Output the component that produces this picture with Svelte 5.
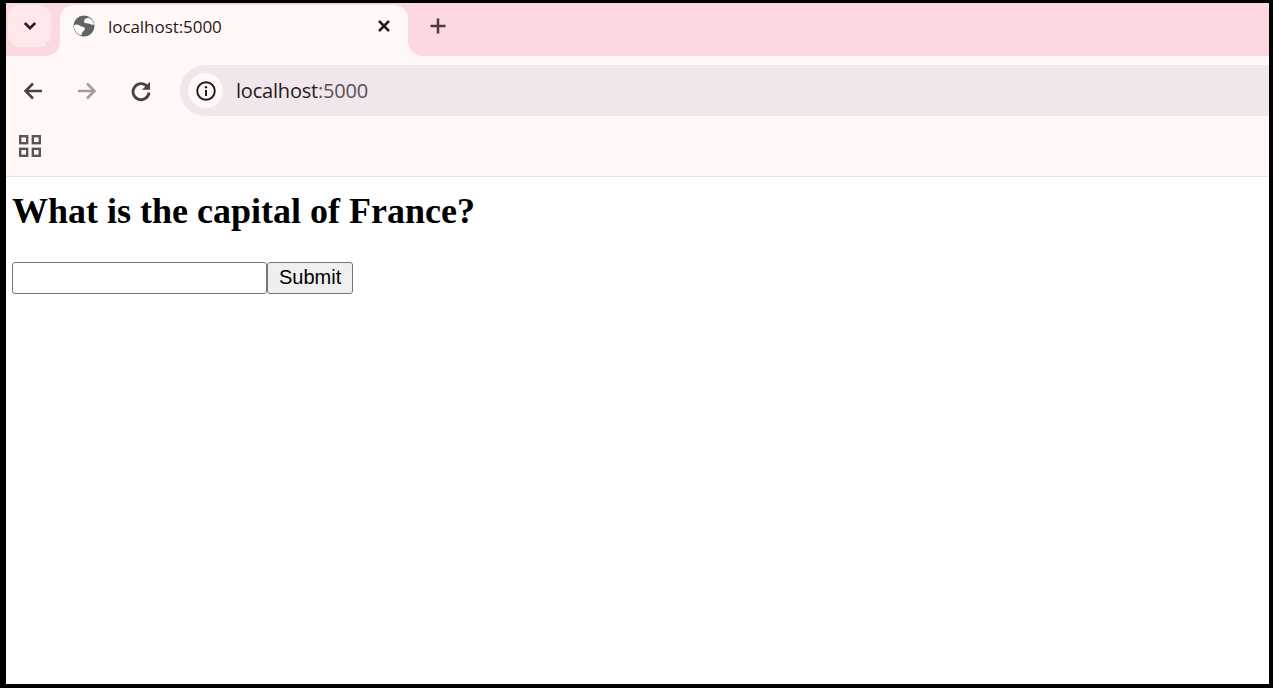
<script lang="ts">
  let answer = $state("");
</script>

<div class="frame">
  <div class="tabstrip">
    <div class="tab-search-wrap">
      <button type="button" class="tab-search" aria-label="Search tabs">
        <svg width="16" height="16" viewBox="0 0 16 16"><path d="M2.800 5 8 10.200 13.200 5" fill="none" stroke="#2b1f22" stroke-width="2.600" /></svg>
      </button>
    </div>
    <div class="tab">
      <svg class="globe" width="22" height="22" viewBox="0 0 22 22">
        <circle cx="11" cy="11" r="10.500" fill="#5f6368" />
        <path d="M15.800 2.800c-2 .2-4.200 1.100-4.800 2.800-.5 1.500.5 2.600 2 2.700 1.600.1 3.200.2 4.500 1 1.200.7 2.500.6 3.500-.1-.5-2.800-2.400-5.100-5.200-6.400z" fill="#fff8f6" />
        <path d="M1 10.200c1.800-1 4-.8 5.600.3 1.200.9 2.500 1.300 3.800 1.500 1.300.2 1.800 1.400 1.300 2.500-.5 1.200-1.600 1.800-2.300 2.700-.5.700-.7 1.700-.8 3.100C4.300 19.600.8 15.500 1 10.200z" fill="#fff8f6" />
      </svg>
      <span class="tab-title">localhost:5000</span>
      <svg class="close" width="14" height="14" viewBox="0 0 14 14"><path d="M2 2l10 10M12 2 2 12" stroke="#1f1a1c" stroke-width="2.500" fill="none" /></svg>
    </div>
    <svg class="new-tab" width="18" height="18" viewBox="0 0 18 18"><path d="M9 1.500v15M1.500 9h15" stroke="#4a3b40" stroke-width="2.500" fill="none" /></svg>
  </div>

  <div class="toolbar">
    <svg class="nav" width="22" height="22" viewBox="0 0 22 22"><path d="M20 11H4M11 3.500 3.500 11l7.500 7.500" fill="none" stroke="#4f3f44" stroke-width="2.500" /></svg>
    <svg class="nav" width="22" height="22" viewBox="0 0 22 22"><path d="M2 11h16M11 3.500l7.500 7.500-7.500 7.500" fill="none" stroke="#a59b9e" stroke-width="2.500" /></svg>
    <svg class="nav" width="22" height="22" viewBox="0 0 22 22"><path d="M17.500 7A8 8 0 1 0 19 12.500" fill="none" stroke="#4f3f44" stroke-width="2.800" /><path d="M20 1.800v8h-8z" fill="#4f3f44" /></svg>
    <div class="omnibox">
      <span class="info">
        <svg width="20" height="20" viewBox="0 0 20 20"><circle cx="10" cy="10" r="8.800" fill="none" stroke="#1f1a1c" stroke-width="1.900" /><path d="M10 9v6" stroke="#1f1a1c" stroke-width="2" /><circle cx="10" cy="6.300" r="1.200" fill="#1f1a1c" /></svg>
      </span>
      <span class="url">localhost<span class="port">:5000</span></span>
    </div>
  </div>

  <div class="bookmarks">
    <svg width="22" height="22" viewBox="0 0 22 22" fill="none" stroke="#5a5557" stroke-width="2.400">
      <rect x="1.200" y="1.200" width="7" height="7" /><rect x="13.800" y="1.200" width="7" height="7" />
      <rect x="1.200" y="13.800" width="7" height="7" /><rect x="13.800" y="13.800" width="7" height="7" />
    </svg>
  </div>

  <main class="page">
    <h1>What is the capital of France?</h1>
    <form onsubmit={(e) => e.preventDefault()}>
      <input type="text" bind:value={answer} /><button type="submit">Submit</button>
    </form>
  </main>
</div>

<style>
  :global(body) {
    margin: 0;
    background: #000;
  }

  .frame {
    box-sizing: border-box;
    height: 688px;
    border: solid #000;
    border-width: 3px 4px 4px 6px;
    display: flex;
    flex-direction: column;
    overflow: hidden;
    background: #fff;
    font-family: "Open Sans", "Noto Sans", sans-serif;
  }

  .tabstrip {
    height: 53px;
    flex: none;
    display: flex;
    align-items: flex-start;
    background: #fcd8df;
  }

  .tab-search-wrap {
    width: 54px;
    height: 53px;
    flex: none;
    box-sizing: border-box;
    padding: 2px 0 0 2px;
  }

  .tab-search {
    width: 43px;
    height: 42px;
    padding: 0;
    border: none;
    border-radius: 12px;
    background: #fde8ea;
    display: flex;
    align-items: center;
    justify-content: center;
  }

  .tab {
    width: 348px;
    height: 51px;
    margin-top: 2px;
    flex: none;
    box-sizing: border-box;
    display: flex;
    align-items: center;
    padding: 0 17px 9px 13px;
    background: #fff8f6;
    border-radius: 14px 14px 0 0;
    position: relative;
  }

  .tab::before,
  .tab::after {
    content: "";
    position: absolute;
    bottom: 0;
    width: 14px;
    height: 14px;
  }

  .tab::before {
    left: -14px;
    background: radial-gradient(circle at 0 0, #fcd8df 13.500px, #fff8f6 14px);
  }

  .tab::after {
    right: -14px;
    background: radial-gradient(circle at 100% 0, #fcd8df 13.500px, #fff8f6 14px);
  }

  .tab-title {
    margin-left: 13px;
    flex: 1;
    font-size: 17px;
    letter-spacing: -0.06px;
    color: #1f1a1c;
  }

  .new-tab {
    margin: 14px 0 0 21px;
  }

  .toolbar {
    height: 65px;
    flex: none;
    box-sizing: border-box;
    display: flex;
    align-items: center;
    padding: 4px 0 0 16px;
    gap: 32px;
    background: #fff8f6;
  }

  .nav {
    flex: none;
  }

  .omnibox {
    flex: 1;
    height: 51px;
    margin-left: -4px;
    margin-right: -30px;
    display: flex;
    align-items: center;
    padding-left: 8px;
    border-radius: 26px;
    background: #f0e6ec;
  }

  .info {
    width: 35px;
    height: 35px;
    flex: none;
    display: flex;
    align-items: center;
    justify-content: center;
    border-radius: 50%;
    background: #fff8f6;
  }

  .url {
    margin-left: 13px;
    font-size: 20px;
    letter-spacing: -0.2px;
    color: #1f1a1c;
  }

  .port {
    color: #5a4f54;
  }

  .bookmarks {
    height: 56px;
    flex: none;
    box-sizing: border-box;
    display: flex;
    align-items: center;
    padding: 0 0 6px 13px;
    background: #fff8f6;
    border-bottom: 1px solid #f0dde2;
  }

  .page {
    flex: 1;
    padding: 0 6px;
    background: #fff;
    color: #000;
  }

  h1 {
    margin: 13px 0 30px;
    font: bold 36px "Liberation Serif", serif;
  }

  form {
    display: flex;
    align-items: stretch;
  }

  input {
    box-sizing: border-box;
    width: 255px;
    height: 32px;
    margin: 0;
    padding: 1px 2px;
    border: 1px solid #767676;
    border-radius: 3px;
    background: #fff;
  }

  button[type="submit"] {
    box-sizing: border-box;
    height: 32px;
    margin: 0;
    padding: 0 11px 2px;
    border: 1px solid #767676;
    border-radius: 3px;
    background: #efefef;
    color: #000;
    font: 20px "Liberation Sans", sans-serif;
  }
</style>
